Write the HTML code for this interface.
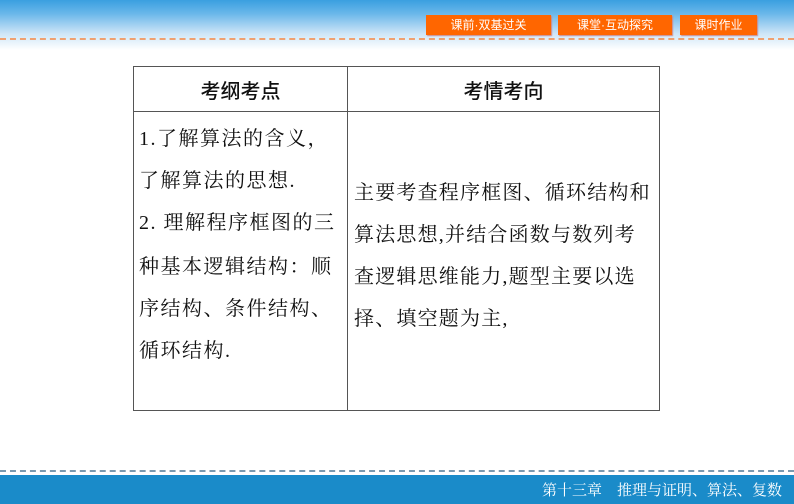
<!DOCTYPE html>
<html><head><meta charset="utf-8"><style>
body{margin:0;width:794px;height:504px;position:relative;overflow:hidden;background:#fff;font-family:"Liberation Serif","Noto Serif CJK SC",serif}
.top{position:absolute;left:0;top:0;width:794px;height:50px;background:linear-gradient(#3a9fe0 0px,#6bb8ea 14px,#cfe6f7 34px,#fff 50px)}
.dash{position:absolute;left:0;width:794px;height:0;border-top:2px dashed}
.btn{position:absolute;top:15px;height:20px;background:#ff6600;color:#fff;font:12px "Liberation Sans","Noto Sans CJK SC",sans-serif;text-align:center;line-height:20px;box-shadow:1px 1px 1px #c88}
.bot{position:absolute;left:0;top:475px;width:794px;height:29px;background:#1a8bc9;color:#fff;font:15px "Noto Serif CJK SC",serif;text-align:right;line-height:29px;box-sizing:border-box;padding-right:12px}
table{position:absolute;left:133px;top:66px;border-collapse:collapse;width:527px;height:345px}
td{border:1.5px solid #555;padding:0;vertical-align:top;font-size:20px;color:#111}
.h{height:44px;text-align:center;vertical-align:middle;font-family:"Noto Sans CJK SC",sans-serif;font-weight:500}
.l{width:208px;padding:4px 0 0 5px;line-height:42px;letter-spacing:1.5px;white-space:nowrap}
.r{padding:60px 0 0 6px;line-height:42px;letter-spacing:1.2px;white-space:nowrap}
.c{font-family:"Noto Serif CJK SC",serif}
</style></head><body>
<div class="top"></div>
<div class="dash" style="top:38px;border-color:#f0a070"></div>
<div class="btn" style="left:426px;width:125px">课前·双基过关</div>
<div class="btn" style="left:558px;width:114px">课堂·互动探究</div>
<div class="btn" style="left:680px;width:77px">课时作业</div>
<table><tr><td class="h">考纲考点</td><td class="h">考情考向</td></tr>
<tr><td class="l">1.了解算法的含义<span class="c">，</span><br>了解算法的思想.<br>2. 理解程序框图的三<br>种基本逻辑结构<span class="c">：</span>顺<br>序结构、条件结构、<br>循环结构.</td>
<td class="r">主要考查程序框图、循环结构和<br>算法思想,并结合函数与数列考<br>查逻辑思维能力,题型主要以选<br>择、填空题为主,</td></tr></table>
<div class="dash" style="top:470px;border-color:#7a9ab0"></div>
<div class="bot">第十三章　推理与证明、算法、复数</div>
</body></html>
